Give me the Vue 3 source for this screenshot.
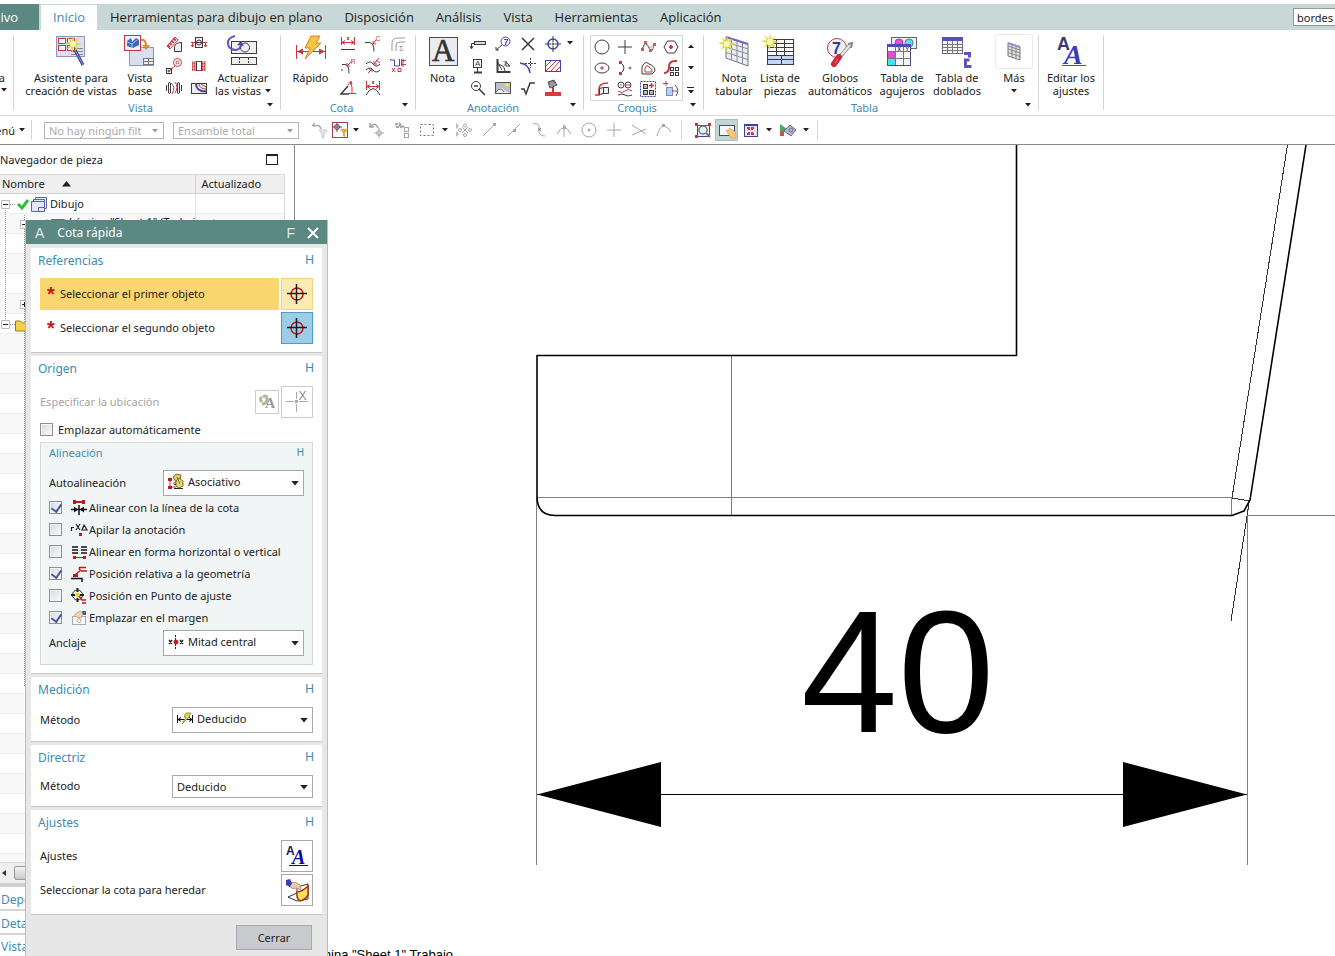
<script setup>
import { h, ref, reactive } from 'vue'

const R = '#c4373c'
const K = '#3c3c3c'
const G = '#a6a6a6'
const B = '#4646a8'
const line = (d, c = K, w = 1, extra = '') => `<path d="${d}" fill="none" stroke="${c}" stroke-width="${w}" ${extra}/>`
const box = (x, y, w, hh, f = 'none', s = K) => `<rect x="${x + 0.5}" y="${y + 0.5}" width="${w}" height="${hh}" fill="${f}" stroke="${s}"/>`
const fillp = (d, f) => `<path d="${d}" fill="${f}"/>`
const circ = (x, y, r, s = K, f = 'none', w = 1) => `<circle cx="${x}" cy="${y}" r="${r}" fill="${f}" stroke="${s}" stroke-width="${w}"/>`
const txt = (x, y, t, size, c, extra = '') => `<text x="${x}" y="${y}" font-size="${size}" fill="${c}" font-family="Liberation Sans, sans-serif" ${extra}>${t}</text>`
const star = (x, y) => `<g transform="translate(${x} ${y})"><path d="M0-9L1.500-3 6-6 3-1.500 9 0 3 2 6 7 1 3-1 9-2 3-7 6-3 1-9-1-3-2-6-7-1-3Z" fill="#dcd648"/><circle r="3" fill="#fffcb0"/></g>`

const icons = {
  wizard: box(1, 1, 28, 20, '#dce0f0', '#8f95bd') + box(3, 3, 7, 5, '#fff', R) + box(12, 3, 7, 5, '#fff', R) + box(3, 10, 7, 5, '#fff', R) + box(12, 10, 7, 5, '#fff', R) + line('M20 13.500h8M16 16.500h12M16 19.500h12', '#888') + star(18, 9) + line('M20 15L28 30', '#3a3f9c', 3) + line('M20 15L28 30', '#8f96d8', 1),
  base: box(5, 12, 24, 18, '#d9def0', '#8f95bd') + box(19, 23, 10, 6, '#eee', '#777') + line('M19 26.500h10M24.500 23v6', '#777') + box(0, 0, 16, 15, '#eef2fb', R) + fillp('M3 6L7 3 8 7 12 3 15 5V10L9 13 3 11Z', '#3d66b5') + line('M3 7l5 2 5-4M8 9v4', '#a9c5f2') + line('M17 5q5-1 5 6', '#e08a35', 2) + fillp('M18 10h8l-4 5Z', '#e08a35'),
  update: box(4, 6, 25, 12, '#efefef') + circ(18, 12.5, 4.5) + box(4, 22, 25, 7, '#efefef') + line('M12.500 23v7M21.500 23v7', K, 1, 'stroke-dasharray="2 1"') + line('M8 1Q0 3 1 9t8 6q5-1 5-6', '#5a56c4', 2) + fillp('M10 10l4-4 3 5Z', '#4a46b8'),
  quick: line('M1.500 10v14M30.500 10v14', R) + line('M2 16.500h28', R) + fillp('M2 16.500l6-3v6ZM30 16.500l-6-3v6Z', R) + `<path d="M16 1h9l-4 7h5L10 24l5-11h-5Z" fill="#f6c443" stroke="#d9822e"/>`,
  note: box(1, 1, 28, 28, '#ebebf1', '#45458c') + txt(4, 25, 'A', 31, '#333', 'style="font-family:Liberation Serif,serif" stroke="#333" stroke-width=".6"'),
  tabular: `<path d="M8 2L30 9V31L8 23Z" fill="#ececf4" stroke="#777"/>` + line('M8 7l22 7M8 12l22 7M8 17.500l22 7M13.500 4v21M19 6v21M24.500 7v22', '#8d8d98') + line('M8 2L30 9', '#7d5fc6', 2) + star(9, 9),
  parts: box(3, 4, 26, 25, '#f8f8f8') + '<rect x="4" y="20" width="25" height="9" fill="#c4d8f4"/>' + line('M3 8.500h27M3 12.500h27M3 16.500h27M3 20.500h27M3 24.500h27M12.500 4v16M20.500 4v16M17.500 20v9') + star(6, 7),
  balloons: circ(11, 11, 9.5, R, '#f2f4fb') + txt(6, 17, '7', 16, '#363b86', 'font-weight="bold"') + line('M13 21L24 8', '#999', 4) + line('M13 21L24 8', '#e8e8e8', 2) + line('M8 27L13 20', '#c92a35', 6, 'stroke-linecap="round"') + line('M9 26L12 22', '#ef8088', 1) + line('M22 7l4-1-1 5', '#888', 2),
  holes: box(4, 1, 25, 11, '#eee', '#666') + circ(12, 7, 4, '#b33aa5', '#e84fd6') + circ(22, 7, 4, '#3a8e9a', '#5fdde6') + box(0, 8, 23, 21, '#f7f7fb', '#4a4a80') + '<rect x="0" y="8" width="24" height="3" fill="#504cb8"/><rect x="1" y="16" width="7" height="6" fill="#e447e0"/><rect x="1" y="23" width="7" height="6" fill="#4ce0ee"/>' + line('M0 15.500h24M0 22.500h24M8.500 11v18M16.500 11v18', '#777') + txt(10.5, 15, 'X', 5, K, 'font-weight="bold"') + txt(18.5, 15, 'Y', 5, K, 'font-weight="bold"'),
  bends: box(0, 2, 20, 15, '#f7f7fb', '#6a6a90') + '<rect x="0" y="1" width="21" height="4" fill="#5450c0"/>' + line('M0 8.500h21M0 11.500h21M0 14.500h21M5.500 5v12M10.500 5v12M15.500 5v12', '#777') + line('M22 17.500h5.500v4M27.500 24h-4v6.500h6', '#5e54b8', 3),
  more: `<path d="M10 7L22 11V24L10 20Z" fill="#e2e2e8" stroke="#777"/>` + line('M10 10l12 4M10 13l12 4M10 16.500l12 4M14 8v13M18 10v13', '#888') + line('M10 7l12 4', '#a38ccc', 2),
  edit: txt(1, 14, 'A', 18, '#40386f', 'font-weight="bold"') + txt(8, 28, 'A', 28, '#3a3cbc', 'font-weight="bold" font-style="italic" style="font-family:Liberation Serif,serif"') + line('M6 29.500h24', '#4a4cc0'),

  // 16px drawing view tools
  section: line('M1 10L9 1M4 13L12 4M1 10l3 3M9 1l3 3', R) + line('M2 11L10 2', R, 3, 'stroke-dasharray="2 1"') + `<path d="M8.500 15.500v-5q1-4 7-4v9Z" fill="#eee" stroke="${K}"/>`,
  cut: box(4, 1, 7, 10, '#eee') + circ(8, 6.5, 2.5) + line('M0 6.500h4M12 6.500h4M1.500 7v4M14.500 7v4M0 9l1.500 2L3 9M13 9l1.500 2L16 9', R) + line('M4 6.500h8'),
  detail: circ(11.5, 4.5, 4, R) + circ(11.5, 4.5, 1.5, R) + line('M9 8L4 12', R) + box(0, 10, 5, 5) + circ(3, 13, 1),
  broken: box(1, 3, 13, 9, '#fff', R) + fillp('M1 3h4v10H1ZM11 3h4v10h-4Z', '#e9a3a5') + line('M5.500 3v10M10.500 3v10') + line('M1 5.500h4M1 8.500h4M1 11.500h4M11 5.500h4M11 8.500h4M11 11.500h4', R, 2, 'stroke-dasharray="1 1"'),
  breakview: line('M.500 5v6M2.500 3v10M2.500 3q2-1 2 0v10q0 1-2 0M15.500 5v6M13.500 3v10M13.500 3q-2-1-2 0v10q0 1 2 0') + line('M5 3q5 4 1 11M9 2q4 5 0 11', R),
  breakout: box(0, 3, 15, 10, '#eee') + line('M5 3.500q0 8 10 8', '#3f4aa0', 2) + line('M8 4q1 5 7 5M10 4l5 3', R),
  linear: line('M1.500 1v8M14.500 1v8', R) + line('M2 6.500h12M5 4.500L2 6.500 5 8.500M11 4.500l3 2L11 8.500M7 1l2 3M9 1L7 4', R) + line('M1 13.500h14'),
  chamfer: line('M0 6.500h4q5 0 5 9') + line('M8 8l3-4M8 5v3h3', R) + txt(10.5, 5, 'C', 7, R),
  thick: line('M2 15V7q0-5 6-5h7M6 15V9q0-3 4-3h5', '#999') + txt(9, 15, 'Σ', 8, '#888'),
  radial: line('M2 6.500h3q4 0 4 9M1 12h2') + line('M7 8l4-4M7 5v3h3', R) + txt(10.5, 6, 'R', 7, R),
  thickness: line('M1 6q4-4 7 0t7 0M1 12q4-4 7 0t7 0') + line('M3 15l4-4M4 11h3v3M14 0L9 6M9 3v3h3M11 2l4 3', R),
  ordinate: line('M.500 1v1h4v6h5V1', B) + line('M12 2.500h4M12 6.500h4M13 1v8', R) + line('M2 10l3 4M5 10l-3 4M8 10.500h3v3H8ZM11.500 1v7', R),
  angle: line('M8 6L1 14h8', K, 1.5) + line('M10 2q3 4 2 12M8 5l3-4 1 4M9 13.500h7', R),
  arc: line('M1 15q7-13 14 0') + line('M1.500 1v9M14.500 1v9M2 6.500h12M5 4.500L2 6.500 5 8.500M11 4.500l3 2L11 8.500M7 1l2 3M9 1L7 4', R),
  fcf: line('M1.500 12V7.500H4') + box(4, 5, 11, 3, '#ddd') + line('M0 10l1.500 3L3 10'),
  datum: box(3, 1, 8, 8, '#fff') + txt(5, 8, 'A', 8, K) + line('M7.500 9v5', K) + line('M4 14.500h8', K, 2),
  zoomout: circ(6, 6, 4.5) + line('M4 6h4M9 9l6 6', K, 1.5),
  balloon: circ(10.5, 5.5, 4.5, B) + txt(8.5, 9, '7', 9, B, 'font-weight="bold"') + line('M7 9l-6 5M1 11v3h3'),
  target: line('M2.500 1v13h13', K, 2) + line('M2 3l5 9M3 7q6-1 7 6') + txt(8, 8, '7', 7, K) + line('M11 4l4 4h-4Z'),
  image: box(0, 2, 15, 11, '#b8c2c8', '#555') + fillp('M1 13q5-9 9-2l5 2Z', '#f2f2f2') + circ(12, 5, 1.5, '#e6d656', '#fff59a') + line('M1 12q5-6 8 0', '#666'),
  cross: line('M2 2l12 12M14 2L2 14', K, 1.5),
  centerline: line('M0 5q9 1 10 10', B, 1.5) + line('M10.500 0v10M5 5.500h11', K, 1, 'stroke-dasharray="2 1"'),
  root: line('M1 9h3l2 5 4-11h5', K, 1.5),
  centermark: circ(8, 8, 5, B, 'none', 1.5) + line('M8 0v6M8 10v6M0 8h6M10 8h6') + circ(8, 8, 1, K),
  hatch: box(0, 2, 15, 11, '#fff', B) + line('M1 8l5-5M1 13l10-10M6 13l9-10M11 13l4-4', R),
  fill: '<rect x="0" y="12" width="16" height="4" fill="#d83c3c"/>' + line('M8 6v7', R, 2) + `<path d="M3 2l6-2 3 5-7 3Z" fill="#999" stroke="#555"/>` + line('M4 3q3-4 6 0', '#666'),
  circle: circ(8, 8, 7),
  plus: line('M8 1v14M1 8h14'),
  spline: line('M2 11L6 3l4 6 4-3', '#aaa') + line('M2 11Q4 3 6 5t4 6 4-5', '#666') + '<path d="M1 9h3v3H1ZM4 2h3v3H4ZM9 10h3v3H9ZM13 4h3v3h-3Z" fill="#c85a5a"/>',
  hexagon: line('M4.500 2h7L15 8l-3.500 6h-7L1 8Z') + circ(8, 8, 1.5, R, R),
  ellipse: '<ellipse cx="8" cy="8" rx="7" ry="5" fill="none" stroke="#3c3c3c"/>' + line('M8 6v4M6 8h4', R),
  arcpt: line('M3 2q8 6 0 12') + '<path d="M2 1h3v3H2ZM2 12h3v3H2Z" fill="#c4373c"/><circle cx="13" cy="8" r="1.500" fill="#888"/>',
  offset: `<path d="M2 14V7q3-7 7-3 6 2 6 7l-3 3Z" fill="#fff" stroke="${K}"/>` + line('M5 12V8q2-4 4-1 4 2 3 5Z', R),
  pattern: line('M1 13q5 0 5-6t6-6h2', R, 2) + box(7, 7, 3, 3) + box(12, 7, 3, 3) + box(7, 12, 3, 3) + box(12, 12, 3, 3),
  project: line('M1 14h4V8q0-6 9-6', R, 1.5) + `<path d="M5.500 7.500l4-1v6l-4 1ZM9.500 6.500h5v6h-5Z" fill="#eee" stroke="${K}"/>`,
  relations: circ(4, 4, 3) + circ(11, 4, 3) + line('M9 4h5M3 4h2', R) + line('M1 10q4 3 7 0t7 0', R) + line('M1 14q4-2 7 0t7 0', K),
  dims: line('M.500.500h15v15H.500Z', B, 1, 'stroke-dasharray="2 1"') + box(3, 3, 4, 4, '#bbb') + box(3, 9, 4, 4, '#bbb') + box(9, 9, 4, 4, '#bbb') + line('M11.500 2v5M9 4.500h5', R, 1.5),
  extend: box(3, 6, 6, 8, '#b8d0ef', '#6d8ec0') + line('M3 0v5M0 2.500h5M9 10h5', R) + line('M12 4q5 5 1 11', B),

  // selection bar
  filter: line('M1 4l2-2v2q6-2 7 3', '#aaa', 1.5) + `<path d="M8 8h8l-3 4v4h-2v-4Z" fill="#e8e2e2" stroke="#d4cccc"/>`,
  filterbox: box(0, 0, 15, 15, '#fff', '#b33b48') + circ(5, 5, 2.5) + line('M5 0v10M0 5h10', '#6b4444') + fillp('M8 7h8l-3 4v4l-2-1v-3Z', '#efa832'),
  undo: line('M1 1v4h4M1 5q5-6 8 1', G, 1.5) + circ(10, 11, 2.5, G) + line('M10 6v10M5 11h10', G),
  hands: line('M1 3q4-3 6 0l3 2M2 5h6M5 3l3 3', G, 2, 'stroke-dasharray="3 1"') + box(10, 5, 4, 4, '#fff', G) + box(10, 11, 4, 4, '#fff', G),
  marquee: line('M1.500 2.500h13v11h-13Z', '#777', 1, 'stroke-dasharray="2 2"'),
  snap: circ(9, 3.5, 1.5, G) + circ(9, 13, 1.5, G) + circ(4, 8, 1.5, G) + circ(14, 8, 1.5, G) + line('M6 5l6 6M12 5l-6 6', G) + fillp('M0 1l3 3-3 3ZM0 9l3 3-3 3Z', '#bbb'),
  endpt: line('M2 14L13 3', G) + fillp('M12 1h3v3h-3Z', G),
  midpt: line('M2 14L14 2', G) + fillp('M7 7h3v3H7Z', G),
  ctrl: line('M2 2q7-2 6 5t6 7', G) + fillp('M7 6h3v3H7Z', G),
  intersect: line('M1 12q7-13 14 0M8 2v13', G) + fillp('M7 4h3v3H7Z', G),
  center: circ(8, 8, 7, G) + circ(8, 8, 1, G, G),
  exist: line('M8 1v14M1 8h14', G),
  tangent: line('M1 3l14 9M1 13l14-6', G),
  oncurve: line('M1 14Q4 3 8 4t7 6', G) + fillp('M6 2h3v3H6Z', G),
  fit: box(2, 3, 12, 11, '#eef', '#44449c') + circ(8, 8, 4, '#777', '#dff3f8', 1.5) + line('M11 11l4 4', '#777', 2) + '<path d="M0 1h3v3H0ZM13 1h3v3h-3ZM0 13h3v3H0Z" fill="#c4373c"/>',
  pan: box(0, 3, 15, 10, '#f4f7ff', '#45459b') + `<path d="M7 8l3 1V6l4 2 3 3v5h-5l-2-3Z" fill="#f8c77a" stroke="#d0944a" stroke-width=".6"/>`,
  shrink: box(1, 2, 13, 12, '#dfe8fa', '#3e419c') + line('M1 3h14', '#3e419c', 2) + line('M4 6h2v2M11 6H9v2M4 12h2v-2M11 12H9v-2', '#d33', 2),
  orient: fillp('M0 2l7 5-7 5Z', '#44ad5b') + fillp('M0 9h4v5H0Z', '#d34d4d') + `<path d="M4 9l6-6 6 5-5 6Z" fill="#b5b9d8" stroke="#666b96"/>` + circ(11, 8, 2, '#777'),

  // dialog
  aim: circ(10, 10, 6, '#c3161c', 'none', 1.5) + line('M9.500 0v20M0 9.500h20', '#1a1a1a', 1.5),
  lockA: line('M4 3q4-3 4 2t-5 5M3 3q-3 2 0 5', '#b8b59c', 3) + txt(6, 14, 'A', 14, '#999', 'font-weight="bold" style="font-family:Liberation Serif,serif"'),
  point: line('M9.500 0v7M9.500 12v8M-1 9.500h8M12 9.500h9', '#aaa') + '<rect x="8" y="8" width="3" height="3" fill="#aaa"/>' + txt(11.5, 8, 'X', 12, '#888'),
  assoc: line('M2 5v9M5 9h4M2 13h6', '#a33') + '<path d="M0 4h4v3H0ZM0 12h4v3H0Z" fill="#c01818"/>' + line('M6 10.500h9M6 14.500h9', '#222') + `<path d="M5 3l3-3 5 1-1 5-4 2Z" fill="#ddd16b" stroke="#77712c"/><path d="M8 7l3-3 4 3v5l-4 2-3-2Z" fill="#e6db78" stroke="#77712c"/>` + line('M9 3l3 7', '#77712c'),
  alignline: line('M2 2h12', '#c01818', 2) + '<path d="M2 0h3v4H2ZM11 0h3v4h-3Z" fill="#c01818"/>' + line('M0 9.500h16M8 5v10', '#111', 1.5) + fillp('M3 6.500l4 3-4 3ZM13 6.500l-4 3 4 3Z', '#111'),
  stack: line('M.500 9V5.500H3M5 2l4 6M9 2L5 8M11 8l2-5 3 5Z', '#222', 1.2) + '<rect x="8" y="11" width="3" height="3" fill="#c01818"/>',
  aligngrid: line('M1 3h6M1 6h6M1 9h6M10 3h6M10 6h6M10 9h6', '#111', 1.5) + line('M3 13.500h10', '#c01818') + '<path d="M2 12h3v3H2ZM12 12h3v3h-3Z" fill="#c01818"/>',
  relative: line('M4 9l6-5M8.500 4V1.500H15M10 5h6', '#c01818', 1.5) + '<rect x="2" y="8" width="5" height="3" fill="#c01818"/>' + line('M0 12.500h11V16', '#111', 1.5),
  snapdlg: circ(6.5, 7, 5, '#222', '#fff') + '<circle cx="6.500" cy="7" r="2.500" fill="#e8d83c"/>' + line('M6.500 0v4M6.500 10v4M0 7h4M9 7h4', '#222', 2) + line('M8 8l3 4h4M11 15h4', '#c01818', 1.5),
  margin: box(1, 6, 13, 8, '#fafafa', '#aaa') + circ(8, 10.5, 2, '#aaa') + `<path d="M3 6q5-7 9-3l-2 5Z" fill="#f5d8a8" stroke="#c9ab80"/><path d="M11 1h4v4h-3Z" fill="#4b56b4"/>`,
  anchor: line('M7.500 1v14', '#222', 1, 'stroke-dasharray="2 1"') + line('M1 6l3 4M4 6l-3 4M12 6l3 4M15 6l-3 4', '#222', 1.3) + circ(8, 8, 2, '#c01818', '#c01818'),
  measure: line('M.500 4v8M15.500 4v8M1 8.500h15M4 6.500L1 8.500l3 2M12 6.500l3 2-3 2', '#111') + `<path d="M9 2h5l-2 3h1l-8 8 4-7H7Z" fill="#dcd85a" stroke="#77752a" stroke-width=".700"/>`,
  settings: txt(-1, 9, 'A', 12, '#1d124e', 'font-weight="bold"') + txt(5, 18, 'A', 20, '#0909a8', 'font-weight="bold" font-style="italic" style="font-family:Liberation Serif,serif"') + line('M2 19.500h19', '#0909a8'),
  inherit: `<path d="M1 17l9-4V7l11-3v15l-11 2Z" fill="#fff" stroke="#333"/><path d="M10 12q5 0 11-6v9q-3 5-8 6-4-3-3-9Z" fill="#ffe35a" stroke="#b42a1e" stroke-width="1.500"/><path d="M3 3q6-2 10 2l1 5-4-2q-5 2-8-2Z" fill="#f0cda0" stroke="#b99572"/><path d="M-1 0l4-1 2 4-2 4-4-2Z" fill="#3d40b4"/>`
}

const Icon = (p) =>
  h('svg', { viewBox: `0 0 ${p.s} ${p.s}`, width: p.s, height: p.s, overflow: 'visible', 'aria-hidden': 'true', innerHTML: icons[p.n] })
Icon.props = ['n', 's']
const Caret = () => h('svg', { viewBox: '0 0 6 4', width: 6, height: 4, 'aria-hidden': 'true', innerHTML: '<path d="M0 0H6L3 3.500Z" fill="currentColor"/>' })

const tabs = ['Herramientas para dibujo en plano', 'Disposición', 'Análisis', 'Vista', 'Herramientas', 'Aplicación']
const viewTools = ['section', 'cut', 'detail', 'broken', 'breakview', 'breakout']
const dimTools = ['linear', 'chamfer', 'thick', 'radial', 'thickness', 'ordinate', 'angle', 'arc']
const noteTools = ['fcf', 'balloon', 'cross', 'centermark', 'datum', 'target', 'centerline', 'hatch', 'zoomout', 'image', 'root', 'fill']
const sketchTools = ['circle', 'plus', 'spline', 'hexagon', 'ellipse', 'arcpt', 'offset', 'pattern', 'project', 'relations', 'dims', 'extend']
const snapTools = ['snap', 'endpt', 'midpt', 'ctrl', 'intersect', 'center', 'exist', 'tangent', 'oncurve']

const search = ref('bordes')
const auto = ref(false)
const options = reactive([
  { icon: 'alignline', label: 'Alinear con la línea de la cota', on: true },
  { icon: 'stack', label: 'Apilar la anotación', on: false },
  { icon: 'aligngrid', label: 'Alinear en forma horizontal o vertical', on: false },
  { icon: 'relative', label: 'Posición relativa a la geometría', on: true },
  { icon: 'snapdlg', label: 'Posición en Punto de ajuste', on: false },
  { icon: 'margin', label: 'Emplazar en el margen', on: true }
])
</script>

<template>
  <div class="app">
    <nav class="tabs">
      <button class="tab file">Archivo</button>
      <button class="tab active">Inicio</button>
      <button v-for="t in tabs" :key="t" class="tab">{{ t }}</button>
      <input v-model="search" class="search" aria-label="Buscar" />
    </nav>

    <div class="ribbon">
      <section class="group g-sheet">
        <div class="tools"><button class="big"><span class="pic"></span>Hoja<br /><Caret /></button></div>
      </section>
      <section class="group g-view">
        <div class="tools">
          <button class="big w-wizard"><span class="pic"><Icon n="wizard" :s="32" /></span>Asistente para<br />creación de vistas</button>
          <button class="big w-base"><span class="pic"><Icon n="base" :s="32" /></span>Vista<br />base</button>
          <div class="grid two"><button v-for="i in viewTools" :key="i" :aria-label="i"><Icon :n="i" :s="16" /></button></div>
          <button class="big w-update"><span class="pic"><Icon n="update" :s="32" /></span>Actualizar<br /><span class="inline">las vistas <Caret /></span></button>
        </div>
        <footer><span>Vista</span><Caret /></footer>
      </section>
      <section class="group g-dim">
        <div class="tools">
          <button class="big w-quick"><span class="pic"><Icon n="quick" :s="32" /></span>Rápido</button>
          <div class="grid three"><button v-for="i in dimTools" :key="i" :aria-label="i"><Icon :n="i" :s="16" /></button></div>
        </div>
        <footer><span>Cota</span><Caret /></footer>
      </section>
      <section class="group g-note">
        <div class="tools">
          <button class="big w-note"><span class="pic"><Icon n="note" :s="30" /></span>Nota</button>
          <div class="grid four"><button v-for="i in noteTools" :key="i" :aria-label="i"><Icon :n="i" :s="16" /></button></div>
          <button class="side" aria-label="Más marcas"><Caret /></button>
        </div>
        <footer><span>Anotación</span><Caret /></footer>
      </section>
      <section class="group g-sketch">
        <div class="tools">
          <div class="gallery"><button v-for="i in sketchTools" :key="i" :aria-label="i"><Icon :n="i" :s="16" /></button></div>
          <div class="scroll">
            <button class="up" aria-label="Subir"><Caret /></button>
            <button aria-label="Bajar"><Caret /></button>
            <button class="expand" aria-label="Expandir"><Caret /></button>
          </div>
        </div>
        <footer><span>Croquis</span><Caret /></footer>
      </section>
      <section class="group g-table">
        <div class="tools">
          <button class="big w-tabular"><span class="pic"><Icon n="tabular" :s="32" /></span>Nota<br />tabular</button>
          <button class="big w-tabular"><span class="pic"><Icon n="parts" :s="32" /></span>Lista de<br />piezas</button>
          <button class="big w-balloons"><span class="pic"><Icon n="balloons" :s="28" /></span>Globos<br />automáticos</button>
          <button class="big w-holes"><span class="pic"><Icon n="holes" :s="30" /></span>Tabla de<br />agujeros</button>
          <button class="big w-bends"><span class="pic"><Icon n="bends" :s="30" /></span>Tabla de<br />doblados</button>
          <button class="big w-more"><span class="pic framed"><Icon n="more" :s="32" /></span>Más<br /><Caret /></button>
        </div>
        <footer><span>Tabla</span><Caret /></footer>
      </section>
      <section class="group g-edit">
        <div class="tools"><button class="big w-edit"><span class="pic"><Icon n="edit" :s="31" /></span>Editar los<br />ajustes</button></div>
      </section>
    </div>

    <div class="bar">
      <button class="menu">Menú <Caret /></button>
      <i class="sep"></i>
      <div class="pick first"><select disabled aria-label="Filtro"><option>No hay ningún filt</option></select><Caret /></div>
      <div class="pick"><select disabled aria-label="Alcance"><option>Ensamble total</option></select><Caret /></div>
      <button class="tool lead" aria-label="Restablecer filtros"><Icon n="filter" :s="16" /></button>
      <button class="tool tight" aria-label="Filtro de selección"><Icon n="filterbox" :s="16" /></button>
      <button class="drop" aria-label="Opciones de filtro"><Caret /></button>
      <button class="tool" aria-label="Deshacer selección"><Icon n="undo" :s="16" /></button>
      <button class="tool" aria-label="Selección múltiple"><Icon n="hands" :s="16" /></button>
      <button class="tool" aria-label="Rectángulo"><Icon n="marquee" :s="16" /></button>
      <button class="drop small" aria-label="Opciones de rectángulo"><Caret /></button>
      <button v-for="i in snapTools" :key="i" class="tool" :aria-label="i"><Icon :n="i" :s="16" /></button>
      <i class="sep mid"></i>
      <button class="tool" aria-label="Ajustar"><Icon n="fit" :s="16" /></button>
      <button class="tool on" aria-label="Ventana"><Icon n="pan" :s="16" /></button>
      <button class="tool" aria-label="Ajustar vista"><Icon n="shrink" :s="16" /></button>
      <button class="drop small" aria-label="Opciones de vista"><Caret /></button>
      <button class="tool" aria-label="Orientar"><Icon n="orient" :s="16" /></button>
      <button class="drop small" aria-label="Opciones de orientación"><Caret /></button>
      <i class="sep end"></i>
    </div>

    <main class="work">
      <aside class="nav">
        <h2>Navegador de pieza <button class="max" aria-label="Maximizar"></button></h2>
        <div class="tree">
          <table>
            <thead>
              <tr><th>Nombre <svg width="10" height="6" viewBox="0 0 10 6" aria-hidden="true"><path d="M0 5.500L4.500 0 9 5.500Z" fill="#222" /></svg></th><th>Actualizado</th></tr>
            </thead>
            <tbody>
              <tr><td class="root">Dibujo</td><td></td></tr>
              <tr><td class="sheet">Lámina "Sheet 1" (Trabajo)</td><td></td></tr>
              <tr v-for="n in 32" :key="n"><td></td><td></td></tr>
            </tbody>
          </table>
          <svg class="branches" width="220" height="640" viewBox="0 0 220 640" aria-hidden="true">
            <g fill="none" stroke="#999" stroke-dasharray="1 1">
              <path d="M5.500 36V146M10 30.500h5M10 150.500h5M24.500 41V512" />
            </g>
            <g fill="#fff" stroke="#bbb"><path d="M1.500 26.500h8v8h-8ZM1.500 146.500h8v8h-8ZM20.500 46.500h8v8h-8ZM20.500 126.500h8v8h-8Z" /></g>
            <path d="M3 30.500h5M3 150.500h5M22 50.500h5M22 130.500h5M24.500 128v5" stroke="#222" />
            <path d="M18 30l4 4 6-8M38 54l4 4 6-12M205 54l4 4 6-12" fill="none" stroke="#2fbf3a" stroke-width="3" />
            <g fill="#e4e7f6" stroke="#5b64a8"><path d="M35.500 23.500h11v11h-11Z" /><path d="M33.500 25.500h11v11h-11Z" /><path d="M31.500 27.500h13v10h-13Z" /><path d="M38.500 33.500h6v4h-6Z" /><path d="M51.500 45.500h13v9h-13Z" /></g>
            <path d="M15.500 157v-10h5l2 2h6v8Z" fill="#f6cf4e" stroke="#9a7a1c" />
          </svg>
        </div>
        <div class="hscroll"><svg width="4" height="6" viewBox="0 0 4 6" aria-hidden="true"><path d="M4 0v6L0 3Z" fill="#333" /></svg><span></span></div>
        <button class="fold">Dependencias</button>
        <button class="fold">Detalles</button>
        <button class="fold end">Vista previa</button>
      </aside>

      <svg class="sheet-view" viewBox="295 145 1040 811" preserveAspectRatio="xMinYMin slice" role="img" aria-label="Vista con cota 40">
        <g fill="none" stroke="#333" shape-rendering="crispEdges">
          <path d="M1287.500 145L1232 498L1250 501" />
          <path d="M1249 503L1231 621" />
        </g>
        <g fill="none" stroke="#808080">
          <path d="M731.500 356V515M537 497.500H1232.500M1231.500 498V516M1248 515.500H1335M536.500 498V865M1247.500 515V865" />
        </g>
        <path d="M1016.500 145V355.500H537V498Q538 515.500 555 515.500H1232L1244 511L1250 500L1306 145" fill="none" stroke="#000" stroke-width="1.600" stroke-linejoin="round" />
        <path d="M537 794.500H1247" stroke="#000" />
        <path d="M537 794.500L661 762V827ZM1247 794.500L1123 762V827Z" />
        <text x="801" y="732" class="value">40</text>
        <text x="453" y="959" text-anchor="end" class="caption">Lámina "Sheet 1" Trabajo</text>
      </svg>
    </main>

    <div class="dialog" role="dialog" aria-label="Cota rápida">
      <header><span class="mark">A</span><span class="name">Cota rápida</span><button class="mark">F</button><button class="close" aria-label="Cerrar ventana"><svg width="12" height="12" viewBox="0 0 12 12"><path d="M1 1l10 10M11 1L1 11" stroke="#fff" stroke-width="2" /></svg></button></header>

      <section class="card">
        <h3>Referencias <button class="mark">H</button></h3>
        <div class="rows">
          <div class="row"><span class="target picked"><b>*</b><span class="text">Seleccionar el primer objeto</span></span><button class="square amber" aria-label="Primer objeto"><Icon n="aim" :s="20" /></button></div>
          <div class="row"><span class="target"><b>*</b><span class="text">Seleccionar el segundo objeto</span></span><button class="square blue" aria-label="Segundo objeto"><Icon n="aim" :s="20" /></button></div>
        </div>
      </section>

      <section class="card">
        <h3>Origen <button class="mark">H</button></h3>
        <div class="rows">
          <div class="row"><span class="text dim">Especificar la ubicación</span><button class="square mini" disabled aria-label="Ubicación asociativa"><Icon n="lockA" :s="16" /></button><button class="square pale" disabled aria-label="Punto"><Icon n="point" :s="20" /></button></div>
          <label class="check"><input v-model="auto" type="checkbox" /><span class="text">Emplazar automáticamente</span></label>
          <div class="inset">
            <h4>Alineación <button class="mark">H</button></h4>
            <div class="field"><label for="autoalign">Autoalineación</label><div class="combo has-icon"><Icon n="assoc" :s="16" /><select id="autoalign"><option>Asociativo</option></select><Caret /></div></div>
            <label v-for="o in options" :key="o.label" class="option"><input v-model="o.on" type="checkbox" /><Icon :n="o.icon" :s="16" /><span class="text">{{ o.label }}</span></label>
            <div class="field last"><label for="anchor">Anclaje</label><div class="combo has-icon"><Icon n="anchor" :s="16" /><select id="anchor"><option>Mitad central</option></select><Caret /></div></div>
          </div>
        </div>
      </section>

      <section class="card">
        <h3>Medición <button class="mark">H</button></h3>
        <div class="rows"><div class="field"><label for="method">Método</label><div class="combo has-icon"><Icon n="measure" :s="16" /><select id="method"><option>Deducido</option></select><Caret /></div></div></div>
      </section>

      <section class="card">
        <h3>Directriz <button class="mark">H</button></h3>
        <div class="rows"><div class="field"><label for="leader">Método</label><div class="combo short"><select id="leader"><option>Deducido</option></select><Caret /></div></div></div>
      </section>

      <section class="card">
        <h3>Ajustes <button class="mark">H</button></h3>
        <div class="rows">
          <div class="row"><span class="text">Ajustes</span><button class="square" aria-label="Ajustes"><Icon n="settings" :s="20" /></button></div>
          <div class="row"><span class="text">Seleccionar la cota para heredar</span><button class="square" aria-label="Heredar"><Icon n="inherit" :s="20" /></button></div>
        </div>
      </section>

      <footer><button>Cerrar</button></footer>
    </div>
  </div>
</template>

<style>
html, body { margin: 0; overflow: hidden; }
</style>

<style scoped>
.app { position: relative; height: 100vh; display: flex; flex-direction: column; overflow: hidden; background: #fff; color: #222; font: 11px/13px "Noto Sans", "Open Sans", sans-serif; }
.app * { box-sizing: border-box; }
button { font: inherit; color: inherit; background: none; border: 0; padding: 0; margin: 0; }
svg { display: block; flex: none; }

.tabs { flex: none; display: flex; margin-top: 4px; height: 26px; background: #c8d8d6; overflow: hidden; }
.tab { flex: none; padding: 0 11px; font-family: "Open Sans", "Noto Sans", sans-serif; font-size: 13px; line-height: 26px; white-space: nowrap; }
.file { display: flex; justify-content: flex-end; width: 39px; padding-right: 21px; background: #5b8882; color: #fff; }
.active { width: 56px; margin: 1px 2px 0; padding: 0; line-height: 25px; background: #fff; color: #3b8db4; text-align: center; }
.search { width: 42px; height: 18px; margin: 4px 0 0 auto; padding: 0 0 0 3px; border: 1px solid #999; border-right: 0; border-radius: 0; background: #fff; color: #222; font: inherit; }

.ribbon { flex: none; display: flex; height: 86px; padding-top: 5px; border-bottom: 1px solid #d9d9d9; }
.group { flex: none; display: flex; flex-direction: column; height: 75px; border-right: 1px solid #d5d5d5; }
.tools { flex: none; display: flex; height: 66px; }
.g-sheet { width: 14px; } .g-view { width: 267px; } .g-dim { width: 135px; } .g-note { width: 168px; }
.g-sketch { width: 120px; } .g-table { width: 335px; } .g-edit { width: 65px; }
.g-view .tools { padding-left: 7px; } .g-dim .tools { padding-left: 5px; } .g-note .tools { padding-left: 4px; }
.g-sketch .tools { padding-left: 6px; } .g-table .tools { padding-left: 7px; }
.g-sheet .tools { justify-content: flex-end; }
.group footer { flex: none; display: flex; align-items: center; height: 14px; color: #3b8db4; }
.group footer span { flex: 1; text-align: center; line-height: 14px; }
.group footer svg { color: #222; margin: 0 7px 6px 0; }
.big { flex: none; display: block; text-align: center; white-space: nowrap; align-self: flex-start; }
.big svg { margin: 0 auto; }
.big > svg { margin-top: 5px; }
.pic { display: flex; align-items: center; justify-content: center; height: 36px; padding-bottom: 4px; }
.inline { display: inline-flex; align-items: center; gap: 4px; }
.g-sheet .big { padding-right: 8px; }
.g-sheet .big svg { margin: 4px -2px 0 auto; }
.w-wizard { width: 100px; } .w-base { width: 38px; } .w-update { width: 64px; } .w-quick { width: 49px; } .w-note { width: 45px; }
.w-tabular { width: 46px; } .w-balloons { width: 74px; } .w-holes { width: 50px; } .w-bends { width: 60px; }
.w-more { width: 38px; margin-left: 8px; } .w-edit { width: 64px; }
.framed { height: 35px; margin: -1px 0 2px; padding: 0; border: 1px solid #eaeaea; border-radius: 3px; }
.grid { display: grid; grid-auto-rows: 22px; margin-top: -2px; }
.grid button, .gallery button { display: grid; place-items: center; }
.two { grid-template-columns: repeat(2, 25px); margin-left: 2px; }
.three { grid-template-columns: repeat(3, 25px); }
.four { grid-template-columns: repeat(4, 25px); }
.side { align-self: flex-start; padding: 6px 0 0 2px; }
.gallery { display: grid; grid-template-columns: repeat(4, 1fr); width: 93px; height: 66px; border: 1px solid #d5d5d5; }
.scroll { display: grid; grid-template-rows: repeat(3, 22px); width: 15px; }
.scroll button { display: grid; place-items: center; }
.up svg { transform: rotate(180deg); }
.expand::before { content: ""; width: 7px; height: 1px; background: #222; }
.expand { align-content: center; gap: 2px; }

.bar { flex: none; display: flex; align-items: center; height: 29px; border-bottom: 1px solid #8a8a8a; }
.menu { display: flex; align-items: center; justify-content: flex-end; gap: 4px; width: 26px; padding-right: 1px; }
.sep { width: 1px; height: 20px; margin-left: 5px; background: #d5d5d5; }
.pick { position: relative; width: 126px; margin-left: 9px; }
.pick.first { width: 120px; margin-left: 12px; }
.pick select { width: 100%; height: 17px; padding: 0 0 0 4px; appearance: none; border: 1px solid #b5b5b5; border-radius: 0; background: #fff; color: #aaa; opacity: 1; font: inherit; line-height: 15px; }
.pick svg { position: absolute; right: 5px; top: 7px; color: #999; width: 8px; }
.tool { flex: none; display: grid; place-items: center; width: 25px; height: 22px; }
.lead { margin-left: 7px; }
.tight { width: 17px; }
.on { width: 23px; background: #c3d6d4; border: 1px solid #a6c2bf; }
.drop { display: grid; place-items: center; width: 16px; height: 22px; }
.drop.small { width: 12px; }
.mid { margin-right: 8px; }

.work { flex: 1; min-height: 0; display: flex; }
.nav { flex: none; display: flex; flex-direction: column; width: 295px; border-right: 1px solid #8a8a8a; }
.nav h2 { display: flex; align-items: center; justify-content: space-between; height: 29px; margin: 0; padding: 0 16px 0 0; font-size: 11px; font-weight: 400; }
.max { width: 12px; height: 11px; border: 1px solid #222; border-top-width: 2px; }
.tree { position: relative; flex: 1; min-height: 0; overflow: hidden; width: 285px; border: 1px solid #d9d9d9; border-left: 0; }
table { width: 100%; table-layout: fixed; border-collapse: collapse; }
th { height: 18px; padding: 0 0 0 6px; background: #efefef; border-bottom: 1px solid #d0d0d0; font-weight: 400; text-align: left; }
th:first-child { width: 195px; padding-left: 2px; border-right: 1px solid #d0d0d0; }
th svg { display: inline-block; margin: 0 0 1px 15px; }
td { height: 20px; padding: 0; border-bottom: 1px solid #ededed; white-space: nowrap; overflow: hidden; }
td:first-child { border-right: 1px solid #e2e2e2; }
tbody tr:nth-child(even) td { background: #f8f8f8; }
td.root { padding-left: 50px; } td.sheet { padding: 0 0 3px 69px; }
.branches { position: absolute; left: 0; top: 0; transform: translateY(-1px); }
.hscroll { flex: none; display: flex; align-items: center; height: 24px; padding-left: 2px; gap: 8px; background: #efefef; border-bottom: 4px solid #d0d0d0; }
.hscroll span { flex: 1; height: 14px; border: 1px solid #999; border-radius: 2px; background: linear-gradient(#f5f5f5, #c9c9c9); }
.fold { flex: none; height: 24px; padding: 4px 1px 0; border-bottom: 2px solid #d5d5d5; background: #fff; color: #3b8db4; font-size: 12px; line-height: 18px; text-align: left; }
.fold.end { height: 21px; padding-top: 3px; border: 0; }
.sheet-view { flex: 1; min-width: 0; height: 100%; }
.value { font: 174px "Liberation Sans", Arial, sans-serif; }
.caption { font: 13px "Liberation Sans", Arial, sans-serif; }

.dialog { position: absolute; left: 25px; top: 220px; bottom: 0; width: 303px; display: flex; flex-direction: column; gap: 3px; border: 1px solid #b9bdbc; border-top: 0; border-bottom: 0; background: #e7e7e7; overflow: hidden; }
.mark { font: 12px/14px "Liberation Sans", Arial, sans-serif; color: inherit; }
.dialog header { flex: none; display: flex; align-items: center; height: 24px; margin: 0 -1px 1px; padding: 0 9px 0 10px; background: #5b8882; color: #fff; }
.dialog header .mark { font-size: 14px; padding-top: 1px; color: #dfe9e8; }
.name { flex: 1; padding-left: 13px; font-size: 12px; }
.close { margin-left: 12px; padding-top: 2px; }
.card { flex: none; margin: 0 5px; background: #fff; border-bottom: 1px solid #c8c8c8; }
h3, h4 { display: flex; justify-content: space-between; align-items: center; margin: 0; height: 24px; padding: 0 8px 0 7px; color: #3b8db4; font-size: 12px; font-weight: 400; }
.rows { padding: 6px 9px 8px; }
.row { display: flex; align-items: center; height: 32px; gap: 2px; }
.row + .row { margin-top: 2px; }
.text { flex: 1; padding-bottom: 2px; }
.dim { color: #a5a5a5; }
.target { flex: 1; display: flex; align-items: center; height: 32px; padding-left: 7px; }
.target b { width: 13px; color: #cc1414; font: bold 20px/20px "Liberation Sans", Arial, sans-serif; }
.picked { background: #fbd66e; }
.square { display: grid; place-items: center; width: 32px; height: 32px; border: 1px solid #a8a8a8; background: #fff; }
.mini { width: 24px; height: 24px; border-color: #ccc; } .pale { border-color: #ccc; }
.amber { background: #fbebb2; border-color: #f0d37e; }
.blue { background: #9bcde6; border-color: #4b9cc4; }
.check { display: flex; align-items: center; gap: 5px; height: 20px; margin: 2px 0; }
input[type="checkbox"] { position: relative; appearance: none; flex: none; width: 13px; height: 13px; margin: 0; border: 1px solid #8e8f8f; background: linear-gradient(135deg, #d5d8dc, #fbfbfb); box-shadow: inset 0 0 0 1px #f4f4f4; }
input[type="checkbox"]:checked::after { content: ""; position: absolute; left: 3px; top: 0; width: 5px; height: 8px; border: solid #44589c; border-width: 0 2px 2px 0; transform: rotate(35deg); }
.check input, .option input { margin-bottom: 1px; }
.inset { padding: 0 8px 8px; border: 1px solid #d3dad9; background: #f1f5f5; }
h4 { height: 20px; padding: 0 0 2px; font-size: 11px; }
h4 .mark { font-size: 10px; padding-top: 2px; }
.field { display: flex; align-items: center; justify-content: space-between; }
.field label { padding-bottom: 2px; }
.inset .field { padding-top: 7px; }
.inset .field.last { padding-top: 1px; }
.inset .option { display: flex; align-items: center; height: 22px; white-space: nowrap; }
.field + .option { margin-top: 1px; }
.option svg { margin: 0 2px 0 9px; }
.combo { position: relative; width: 141px; }
.combo select { display: block; width: 100%; height: 26px; padding: 0 0 3px 4px; appearance: none; border: 1px solid #a8a8a8; border-radius: 0; background: #fff; color: #222; font: inherit; }
.combo.has-icon select { padding-left: 24px; }
.combo.short select { height: 23px; padding-bottom: 0; }
.combo svg { position: absolute; left: 5px; top: 4px; }
.combo select + svg { left: auto; right: 5px; top: 50%; width: 8px; height: 5px; margin-top: -2px; }
.dialog footer { display: flex; justify-content: flex-end; padding: 7px 15px 0; }
.dialog footer button { width: 76px; height: 25px; border: 1px solid #a8abad; background: #c9cace; }
</style>
